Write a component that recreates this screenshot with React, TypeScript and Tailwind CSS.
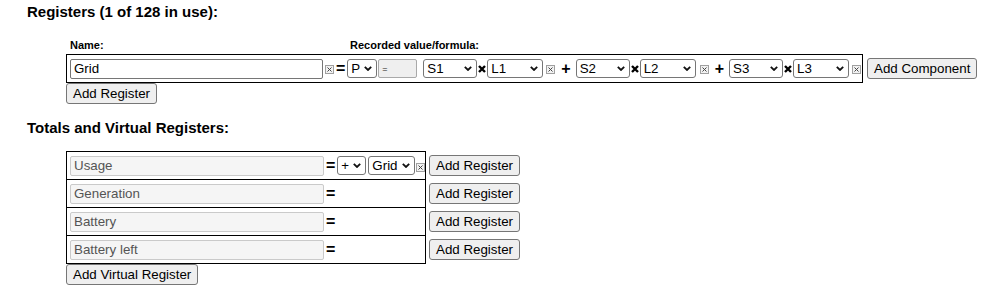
import React from "react";

const font = "font-['Liberation_Sans',Arial,sans-serif]";

function XBox({ className = "" }: { className?: string }) {
  return (
    <span
      className={`inline-flex shrink-0 items-center justify-center w-[9px] h-[9px] border border-[#a0a0a0] bg-[#f2f2f2] ${className}`}
    >
      <svg width="5" height="5" viewBox="0 0 5 5">
        <path d="M0.5 0.5L4.5 4.5M4.5 0.5L0.5 4.5" stroke="#444" strokeWidth="1" fill="none" />
      </svg>
    </span>
  );
}

function Chevron() {
  return (
    <svg width="8" height="5" viewBox="0 0 8 5" className="shrink-0">
      <path d="M0.8 0.8L4 4L7.2 0.8" stroke="#111" strokeWidth="1.8" fill="none" />
    </svg>
  );
}

function Select({ value, w, className = "" }: { value: string; w: string; className?: string }) {
  return (
    <div
      className={`flex shrink-0 items-center justify-between h-[19px] ${w} border border-[#767676] rounded-[3px] bg-white pl-[3px] pr-[4px] text-[13.33px] leading-[15px] text-black ${className}`}
    >
      <span>{value}</span>
      <Chevron />
    </div>
  );
}

function Times() {
  return (
    <svg width="8" height="8" viewBox="0 0 8 8" className="shrink-0 mx-[1px]">
      <path d="M1 1L7 7M7 1L1 7" stroke="#000" strokeWidth="2.4" fill="none" />
    </svg>
  );
}

function Eq({ className = "" }: { className?: string }) {
  return <span className={`text-[16px] font-bold leading-[17px] ${className}`}>=</span>;
}

function Btn({ children, className = "" }: { children: React.ReactNode; className?: string }) {
  return (
    <button
      className={`shrink-0 h-[21px] px-[6px] border border-[#767676] rounded-[3px] bg-[#efefef] text-[13.33px] leading-[15px] text-black ${font} ${className}`}
    >
      {children}
    </button>
  );
}

function VRow({ name, last, children }: { name: string; last?: boolean; children?: React.ReactNode }) {
  return (
    <div className="flex items-center">
      <div
        className={`flex items-center w-[360px] h-[28px] border-x border-t border-black pl-[3px] ${last ? "h-[29px] border-b" : ""}`}
      >
        <div className="h-[20px] w-[254px] shrink-0 border border-[#cacaca] rounded-[2px] bg-[#f5f5f5] px-[3px] text-[13.33px] leading-[18px] text-[#545454]">
          {name}
        </div>
        <Eq className="ml-[2px]" />
        {children}
      </div>
      <Btn className="ml-[3px] h-[20px]">Add Register</Btn>
    </div>
  );
}

export default function App() {
  return (
    <div className={`${font} text-black bg-white w-[987px] h-[292px] pl-[27px]`}>
      <h3 className="pt-[3px] text-[15px] leading-[17px] font-bold">Registers (1 of 128 in use):</h3>

      <div className="mt-[19px] ml-[43px] flex text-[11px] leading-[13px] font-bold">
        <span className="w-[280px]">Name:</span>
        <span>Recorded value/formula:</span>
      </div>

      <div className="mt-[2px] ml-[39px] flex items-center">
        <div className="flex items-center h-[29px] border border-black pl-[3px]">
          <div className="h-[20px] w-[253px] shrink-0 border border-[#767676] rounded-[2px] bg-white px-[3px] text-[13.33px] leading-[18px]">
            Grid
          </div>
          <XBox className="ml-[2px] mt-[2px]" />
          <Eq className="ml-[2px]" />
          <Select value="P" w="w-[30px]" className="ml-[2px]" />
          <div className="ml-[1px] h-[19px] w-[39px] shrink-0 border border-[#a9a9a9] rounded-[2px] bg-[#efefef] pl-[3px] text-[9px] leading-[19px] text-[#222]">
            =
          </div>
          <Select value="S1" w="w-[54px]" className="ml-[6px]" />
          <Times />
          <Select value="L1" w="w-[56px]" />
          <XBox className="ml-[3px] mt-[2px]" />
          <span className="ml-[6px] text-[16px] font-bold leading-[17px]">+</span>
          <Select value="S2" w="w-[54px]" className="ml-[5px]" />
          <Times />
          <Select value="L2" w="w-[56px]" />
          <XBox className="ml-[4px] mt-[2px]" />
          <span className="ml-[6px] text-[16px] font-bold leading-[17px]">+</span>
          <Select value="S3" w="w-[54px]" className="ml-[5px]" />
          <Times />
          <Select value="L3" w="w-[56px]" />
          <XBox className="ml-[3px] mr-[1px] mt-[2px]" />
        </div>
        <Btn className="ml-[4px]">Add Component</Btn>
      </div>
      <Btn className="ml-[39px] block">Add Register</Btn>

      <h3 className="mt-[15px] text-[15px] leading-[17px] font-bold">Totals and Virtual Registers:</h3>

      <div className="mt-[15px] ml-[39px] flex flex-col items-start">
        <VRow name="Usage">
          <Select value="+" w="w-[29px]" className="ml-[2px]" />
          <Select value="Grid" w="w-[47px]" className="ml-[2px]" />
          <XBox className="ml-[1px] mt-[3px]" />
        </VRow>
        <VRow name="Generation" />
        <VRow name="Battery" />
        <VRow name="Battery left" last />
        <Btn>Add Virtual Register</Btn>
      </div>
    </div>
  );
}
